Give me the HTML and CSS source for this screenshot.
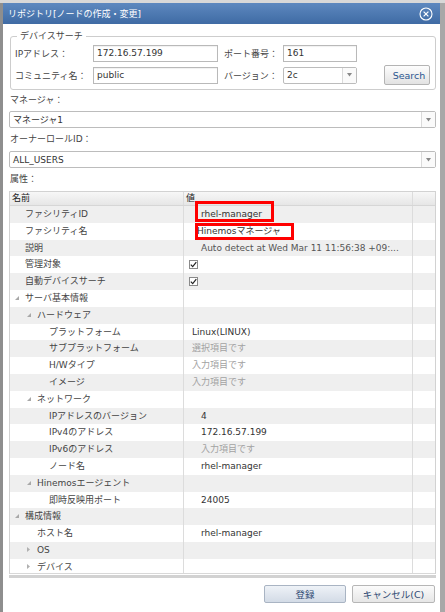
FILE: index.html
```html
<!DOCTYPE html>
<html>
<head>
<meta charset="utf-8">
<link rel="stylesheet" href="styles.css">
</head>
<body>
<div class="topstrip"></div>
<div class="window">
  <div class="titlebar">
    <span class="title">リポジトリ[ノードの作成・変更]</span>
    <svg class="close" width="14" height="14" viewBox="0 0 14 14"><circle cx="7" cy="7" r="6" fill="none" stroke="#fff" stroke-width="1.1"/><path d="M4.6 4.6 L9.4 9.4 M9.4 4.6 L4.6 9.4" stroke="#fff" stroke-width="1.2"/></svg>
  </div>
  <div class="content">
    <div class="search">
      <div class="legend">デバイスサーチ</div>
      <div class="sgrid">
        <span class="flabel">IPアドレス：</span>
        <div class="inp">172.16.57.199</div>
        <span class="flabel l2">ポート番号：</span>
        <div class="inp">161</div>
        <span></span>
        <span class="flabel">コミュニティ名：</span>
        <div class="inp">public</div>
        <span class="flabel l2">バージョン：</span>
        <div class="sel"><span class="seltext">2c</span><span class="arrow"><svg width="5" height="4" viewBox="0 0 5 4"><path d="M0 0 H5 L2.5 3.5 Z" fill="#888"/></svg></span></div>
        <div class="searchbtn">Search</div>
      </div>
    </div>

    <div class="lbl first">マネージャ：</div>
    <div class="sel wide"><span class="seltext">マネージャ1</span><span class="arrow"><svg width="5" height="4" viewBox="0 0 5 4"><path d="M0 0 H5 L2.5 3.5 Z" fill="#888"/></svg></span></div>
    <div class="lbl">オーナーロールID：</div>
    <div class="sel wide s2"><span class="seltext">ALL_USERS</span><span class="arrow"><svg width="5" height="4" viewBox="0 0 5 4"><path d="M0 0 H5 L2.5 3.5 Z" fill="#888"/></svg></span></div>
    <div class="lbl">属性：</div>

    <div class="table">
      <div class="thead">
        <div class="cn">名前</div>
        <div class="cv">値</div>
        <div class="cx"></div>
      </div>
      <div class="tbody">
        <div class="tr g"><div class="cn l0"><span class="tw"></span>ファシリティID</div><div class="cv p17">rhel-manager</div><div class="cx"></div></div>
        <div class="tr"><div class="cn l0"><span class="tw"></span>ファシリティ名</div><div class="cv p13">Hinemosマネージャ</div><div class="cx"></div></div>
        <div class="tr g"><div class="cn l0"><span class="tw"></span>説明</div><div class="cv p17 dim">Auto detect at Wed Mar 11 11:56:38 +09:...</div><div class="cx"></div></div>
        <div class="tr"><div class="cn l0"><span class="tw"></span>管理対象</div><div class="cv p5"><svg class="cb" width="9" height="9" viewBox="0 0 9 9"><rect x="0.5" y="0.5" width="8" height="8" fill="#fff" stroke="#8a8a8a"/><path d="M1.8 4.6 L3.7 6.6 L7.3 2.2" fill="none" stroke="#222" stroke-width="1.2"/></svg></div><div class="cx"></div></div>
        <div class="tr g"><div class="cn l0"><span class="tw"></span>自動デバイスサーチ</div><div class="cv p5"><svg class="cb" width="9" height="9" viewBox="0 0 9 9"><rect x="0.5" y="0.5" width="8" height="8" fill="#fff" stroke="#8a8a8a"/><path d="M1.8 4.6 L3.7 6.6 L7.3 2.2" fill="none" stroke="#222" stroke-width="1.2"/></svg></div><div class="cx"></div></div>
        <div class="tr"><div class="cn l0"><span class="tw"><svg width="4" height="4" viewBox="0 0 4 4"><path d="M4 0 V4 H0 Z" fill="#a8a8a8"/></svg></span>サーバ基本情報</div><div class="cv"></div><div class="cx"></div></div>
        <div class="tr g"><div class="cn l1"><span class="tw"><svg width="4" height="4" viewBox="0 0 4 4"><path d="M4 0 V4 H0 Z" fill="#a8a8a8"/></svg></span>ハードウェア</div><div class="cv"></div><div class="cx"></div></div>
        <div class="tr"><div class="cn l2"><span class="tw"></span>プラットフォーム</div><div class="cv p8">Linux(LINUX)</div><div class="cx"></div></div>
        <div class="tr g"><div class="cn l2"><span class="tw"></span>サブプラットフォーム</div><div class="cv p8 ph">選択項目です</div><div class="cx"></div></div>
        <div class="tr"><div class="cn l2"><span class="tw"></span>H/Wタイプ</div><div class="cv p8 ph">入力項目です</div><div class="cx"></div></div>
        <div class="tr g"><div class="cn l2"><span class="tw"></span>イメージ</div><div class="cv p8 ph">入力項目です</div><div class="cx"></div></div>
        <div class="tr"><div class="cn l1"><span class="tw"><svg width="4" height="4" viewBox="0 0 4 4"><path d="M4 0 V4 H0 Z" fill="#a8a8a8"/></svg></span>ネットワーク</div><div class="cv"></div><div class="cx"></div></div>
        <div class="tr g"><div class="cn l2"><span class="tw"></span>IPアドレスのバージョン</div><div class="cv p17">4</div><div class="cx"></div></div>
        <div class="tr"><div class="cn l2"><span class="tw"></span>IPv4のアドレス</div><div class="cv p17">172.16.57.199</div><div class="cx"></div></div>
        <div class="tr g"><div class="cn l2"><span class="tw"></span>IPv6のアドレス</div><div class="cv p17 ph">入力項目です</div><div class="cx"></div></div>
        <div class="tr"><div class="cn l2"><span class="tw"></span>ノード名</div><div class="cv p17">rhel-manager</div><div class="cx"></div></div>
        <div class="tr g"><div class="cn l1"><span class="tw"><svg width="4" height="4" viewBox="0 0 4 4"><path d="M4 0 V4 H0 Z" fill="#a8a8a8"/></svg></span>Hinemosエージェント</div><div class="cv"></div><div class="cx"></div></div>
        <div class="tr"><div class="cn l2"><span class="tw"></span>即時反映用ポート</div><div class="cv p17">24005</div><div class="cx"></div></div>
        <div class="tr g"><div class="cn l0"><span class="tw"><svg width="4" height="4" viewBox="0 0 4 4"><path d="M4 0 V4 H0 Z" fill="#a8a8a8"/></svg></span>構成情報</div><div class="cv"></div><div class="cx"></div></div>
        <div class="tr"><div class="cn l1"><span class="tw"></span>ホスト名</div><div class="cv p17">rhel-manager</div><div class="cx"></div></div>
        <div class="tr g"><div class="cn l1"><span class="tw"><svg width="3" height="5" viewBox="0 0 3 5"><path d="M0 0 L3 2.5 L0 5 Z" fill="#b0b0b0"/></svg></span>OS</div><div class="cv"></div><div class="cx"></div></div>
        <div class="tr"><div class="cn l1"><span class="tw"><svg width="3" height="5" viewBox="0 0 3 5"><path d="M0 0 L3 2.5 L0 5 Z" fill="#b0b0b0"/></svg></span>デバイス</div><div class="cv"></div><div class="cx"></div></div>
      </div>
      <div class="hl hl1"></div>
      <div class="hl hl2"></div>
    </div>
    <div class="hscroll"></div>

    <div class="buttons">
      <div class="btn primary">登録</div>
      <div class="btn">キャンセル(C)</div>
    </div>
  </div>
</div>
</body>
</html>
```

FILE: styles.css
```css
html, body {
  margin: 0;
  padding: 0;
}
body {
  width: 445px;
  height: 612px;
  overflow: hidden;
  background: #e4e4e4;
  font-family: "DejaVu Sans", "Noto Sans CJK JP", sans-serif;
  font-size: 9px;
  color: #333;
}
.topstrip {
  height: 3px;
  background: #d8d8d8;
}
.window {
  height: 609px;
  display: flex;
  flex-direction: column;
  background: #fff;
  border-left: 3px solid #8e8e8e;
  border-right: 5px solid #a8a8a8;
}
.titlebar {
  height: 21px;
  flex: none;
  display: flex;
  align-items: center;
  justify-content: space-between;
  padding: 0 7px 0 5px;
  background: linear-gradient(#5d88bf, #3f6ba4);
  color: #fff;
  font-size: 9px;
}
.close {
  display: block;
}
.content {
  padding: 0 4px 0 6px;
  display: flex;
  flex-direction: column;
}
.search {
  position: relative;
  margin: 12px 0 0 1px;
  padding: 8px 5px 4px 4px;
  border: 1px solid #cdcdcd;
  border-radius: 3px;
}
.legend {
  position: absolute;
  left: 6px;
  top: -7px;
  padding: 0 3px;
  line-height: 12px;
  background: #fff;
  color: #444;
}
.sgrid {
  display: grid;
  grid-template-columns: 78px 125px 65px 74px 1fr;
  grid-template-rows: 17px 20px;
  row-gap: 3px;
  align-items: center;
}
.flabel {
  color: #444;
  white-space: nowrap;
}
.flabel.l2 {
  padding-left: 6px;
}
.inp {
  box-sizing: border-box;
  height: 17px;
  line-height: 15px;
  border: 1px solid #b9b9b9;
  padding: 0 3px;
  color: #333;
  background: #fff;
  box-shadow: inset 0 1px 1px rgba(0,0,0,0.06);
  white-space: nowrap;
  overflow: hidden;
}
.sel {
  box-sizing: border-box;
  height: 17px;
  border: 1px solid #bcbcbc;
  border-radius: 2px;
  display: flex;
  align-items: center;
  background: #fff;
}
.seltext {
  flex: 1;
  padding-left: 3px;
  white-space: nowrap;
}
.arrow {
  width: 13px;
  align-self: stretch;
  border-left: 1px solid #dadada;
  display: flex;
  align-items: center;
  justify-content: center;
  background: #fafafa;
}
.arrow svg { display: block; }
.searchbtn {
  justify-self: end;
  width: 46px;
  height: 20px;
  box-sizing: border-box;
  border: 1px solid #b4b4b4;
  border-radius: 2px;
  background: linear-gradient(#fdfdfd, #e2e2e2);
  color: #2b5690;
  font-size: 9.5px;
  display: flex;
  align-items: center;
  justify-content: center;
  padding-left: 4px;
}
.lbl {
  height: 14px;
  line-height: 14px;
  margin-top: 4px;
  padding-left: 1px;
  color: #444;
}
.lbl.first {
  margin-top: 3px;
}
.sel.wide {
  margin-top: 4px;
}
.sel.wide.s2 {
  margin-top: 5px;
}
.table {
  position: relative;
  margin-top: 5px;
  border: 1px solid #d2d2d2;
  border-bottom: none;
}
.thead {
  display: flex;
  height: 13px;
  line-height: 13px;
  background: linear-gradient(#f7f7f7, #e6e6e6);
  border-bottom: 1px solid #d6d6d6;
  color: #222;
}
.thead .cn { padding-left: 2px; }
.thead .cv { padding-left: 2px; }
.cn {
  width: 174px;
  flex: none;
  box-sizing: border-box;
  border-right: 1px solid #dcdcdc;
  white-space: nowrap;
  overflow: hidden;
}
.cv {
  width: 229px;
  flex: none;
  box-sizing: border-box;
  border-right: 1px solid #dcdcdc;
  white-space: nowrap;
  overflow: hidden;
}
.cx {
  flex: 1;
}
.tbody {
  height: 367px;
  overflow: hidden;
  border-bottom: 1px solid #d8d8d8;
}
.tr {
  display: flex;
  height: 16.8px;
  line-height: 16.8px;
  background: #fff;
}
.tr.g {
  background: #efefef;
}
.tw {
  display: inline-flex;
  width: 10px;
  height: 16px;
  align-items: center;
  vertical-align: top;
}
.tw svg { display: block; }
.l0 { padding-left: 5px; }
.l1 { padding-left: 17px; }
.l2 { padding-left: 29px; }
.tr .cn { color: #444; }
.p17 { padding-left: 17px; }
.p13 { padding-left: 13px; }
.p8 { padding-left: 8px; }
.p5 { padding-left: 5px; }
.cb {
  display: block;
  margin-top: 4px;
}
.ph { color: #a2a2a2; }
.dim { color: #555; }
.hl {
  position: absolute;
  box-sizing: border-box;
  border: 3px solid #ff0000;
}
.hl1 {
  left: 185px;
  top: 9px;
  width: 79px;
  height: 21px;
}
.hl2 {
  left: 185px;
  top: 31px;
  width: 99px;
  height: 17px;
}
.hscroll {
  height: 3px;
  margin-top: 1px;
  background: #d2d2d2;
}
.buttons {
  display: flex;
  justify-content: flex-end;
  gap: 6px;
  margin-top: 7px;
  padding-right: 1px;
}
.btn {
  width: 83px;
  height: 18px;
  box-sizing: border-box;
  border: 1px solid #b6b6b6;
  border-radius: 2px;
  background: linear-gradient(#fbfbfb, #e6e6e6);
  color: #2f4a73;
  font-size: 9.5px;
  display: flex;
  align-items: center;
  justify-content: center;
}
.btn.primary {
  width: 82px;
  border-color: #a9b4c3;
  background: linear-gradient(#eef2f7, #d3dbe6);
}
```
